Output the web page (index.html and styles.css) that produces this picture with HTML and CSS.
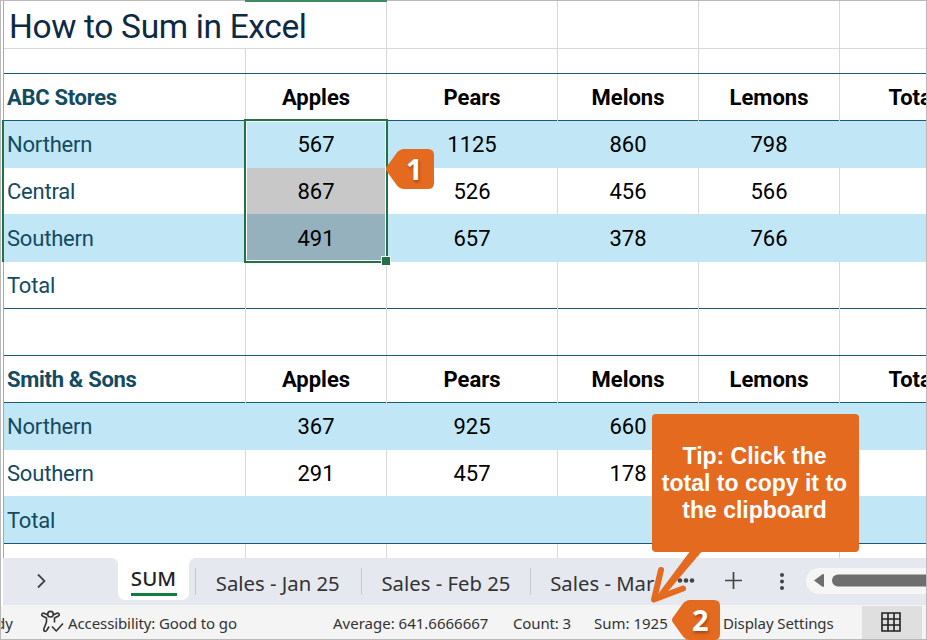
FILE: index.html
```html
<!DOCTYPE html>
<html lang="en">
<head>
    <meta charset="UTF-8">
    <meta name="viewport" content="width=device-width, initial-scale=1.0">
    <title>How to Sum in Excel</title>
    <link rel="stylesheet" href="styles.css">
</head>
<body>
    <div class="window">
        <div class="sheet">
            <div class="row title-row"><h1>How to Sum in Excel</h1><i></i><i></i><i></i><i></i></div>
            <div class="row spacer small"><i></i><i></i><i></i><i></i><i></i><i></i></div>
            <div class="row head"><b>ABC Stores</b><b>Apples</b><b>Pears</b><b>Melons</b><b>Lemons</b><b>Total</b></div>
            <div class="row band"><span>Northern</span><span>567</span><span>1125</span><span>860</span><span>798</span><span></span></div>
            <div class="row plain"><span>Central</span><span class="picked">867</span><span>526</span><span>456</span><span>566</span><span></span></div>
            <div class="row band tall"><span>Southern</span><span class="picked dark">491</span><span>657</span><span>378</span><span>766</span><span></span></div>
            <div class="row last"><span>Total</span><span></span><span></span><span></span><span></span><span></span></div>
            <div class="row spacer"><i></i><i></i><i></i><i></i><i></i><i></i></div>
            <div class="row head"><b>Smith &amp; Sons</b><b>Apples</b><b>Pears</b><b>Melons</b><b>Lemons</b><b>Total</b></div>
            <div class="row band"><span>Northern</span><span>367</span><span>925</span><span>660</span><span></span><span></span></div>
            <div class="row plain"><span>Southern</span><span>291</span><span>457</span><span>178</span><span></span><span></span></div>
            <div class="row band tall last"><span>Total</span><span></span><span></span><span></span><span></span><span></span></div>
            <div class="row tail"><i></i><i></i><i></i><i></i><i></i><i></i></div>
            <div class="selection"></div>
        </div>

        <div class="tabs">
            <div class="nav">
                <svg width="12" height="16" viewBox="0 0 12 16"><path d="M2 1.5 8.5 8 2 14.5"/></svg>
            </div>
            <div class="tab active"><span>SUM</span></div>
            <div class="tab jan">Sales - Jan 25</div>
            <div class="tab feb">Sales - Feb 25</div>
            <div class="tab mar">Sales - Mar</div>
            <div class="tools">
                <svg width="252" height="44" viewBox="0 0 252 44">
                    <g class="dots">
                        <circle cx="6" cy="22.500" r="2.300"/><circle cx="12" cy="22.500" r="2.300"/><circle cx="18" cy="22.500" r="2.300"/>
                        <circle cx="108" cy="17" r="2"/><circle cx="108" cy="23.500" r="2"/><circle cx="108" cy="30" r="2"/>
                    </g>
                    <path class="plus" d="M51 22.500h17M59.500 14v17"/>
                    <rect class="track" x="132" y="10" width="140" height="26" rx="13"/>
                    <path class="left" d="M140 22.500 148 16.500Q150 15.500 150 17V28Q150 29.500 148 28.500Z"/>
                    <rect class="thumb" x="158" y="16.500" width="120" height="12" rx="6"/>
                </svg>
            </div>
        </div>

        <div class="status">
            <span class="ready">dy</span>
            <svg class="person" width="24" height="24" viewBox="0 0 24 24">
                <circle cx="10.500" cy="4.200" r="2.800"/>
                <path d="M7.500 4.800 4 3.200Q2 2.800 1.700 4.500 1.600 5.600 3 6.300L6.500 8V12L3.800 19Q3.500 21 5 21.300 6.300 21.500 7 20L9 16.500M13.500 4.800 17 3.200Q19 2.800 19.300 4.500 19.400 5.600 18 6.300L14.500 8V12.500M12 16.500l4.300 4.500 6.700-7.500"/>
            </svg>
            <span class="access">Accessibility: Good to go</span>
            <span class="average">Average: 641.6666667</span>
            <span class="count">Count: 3</span>
            <span class="sum">Sum: 1925</span>
            <span class="display">Display Settings</span>
            <span class="view">
                <svg width="20" height="20" viewBox="0 0 20 20"><path d="M1 1h18v18H1zM7 1v18M13 1v18M1 7h18M1 13h18"/></svg>
            </span>
        </div>
    </div>

    <div class="row-mark"></div>
    <div class="top-mark"></div>

    <!-- callouts -->
    <svg class="arrow" width="70" height="66" viewBox="0 0 70 66">
        <path class="barbs" d="M19 26 12 55.500 41 44.500"/>
        <path class="shaft" d="M10.500 57.500 49 6H61L22 52Z"/>
    </svg>
    <div class="tip">Tip: Click the<br>total to copy it to<br>the clipboard</div>
    <div class="badge one">
        <svg width="48" height="40" viewBox="0 0 48 40"><path d="M.5 22Q-.5 20 .5 18L11 3.500Q14 0 18 0H42Q48 0 48 6V34Q48 40 42 40H18Q14 40 11 36.500Z"/></svg>
        <span>1</span>
    </div>
    <div class="badge two">
        <svg width="48" height="40" viewBox="0 0 48 40"><path d="M.5 22Q-.5 20 .5 18L11 3.500Q14 0 18 0H42Q48 0 48 6V34Q48 40 42 40H18Q14 40 11 36.500Z"/></svg>
        <span>2</span>
    </div>
</body>
</html>
```

FILE: styles.css
```css
* {
    box-sizing: border-box;
}
body {
    margin: 0;
    width: 927px;
    height: 640px;
    overflow: hidden;
    position: relative;
    background: #fff;
    font-family: Roboto, sans-serif;
}
.window {
    width: 927px;
    height: 640px;
    border: 1px solid #b9b9b9;
    overflow: hidden;
    display: flex;
    flex-direction: column;
}
.sheet {
    position: relative;
    height: 557px;
    margin-left: 2px;
    border-left: 1px solid #a8a8a8;
    overflow: hidden;
    flex: none;
}
.row {
    display: grid;
    grid-template-columns: 242px 141px 171px 141px 141px 147px;
    height: 47px;
    font-size: 22px;
    line-height: 47px;
    color: #000;
}
.row > * {
    border-right: 1px solid #d9d9d9;
    text-align: center;
}
.row > :first-child {
    text-align: left;
    padding-left: 3px;
    color: #134b63;
    letter-spacing: -0.2px;
}
.title-row {
    grid-template-columns: 383px 171px 141px 141px 147px;
    height: 48px;
    border-bottom: 1px solid #d9d9d9;
}
h1 {
    margin: 0;
    font-size: 33.5px;
    font-weight: 400;
    line-height: 51px;
}
.row > h1:first-child {
    color: #0d2a45;
    padding-left: 5px;
    letter-spacing: -0.35px;
}
.small {
    height: 24px;
}
.head {
    height: 48px;
    line-height: 48px;
    border-top: 1px solid #1b5a75;
    border-bottom: 1px solid #1b5a75;
}
.row.head > :first-child {
    letter-spacing: -0.3px;
}
.band {
    background: #c1e6f5;
}
.band > * {
    border-color: transparent;
}
.plain {
    height: 46px;
}
.tall {
    height: 48px;
    line-height: 49px;
}
.last {
    border-bottom: 1px solid #1b5a75;
}
.spacer:not(.small) {
    height: 46px;
}
.picked {
    background: #c8c8c8;
}
.dark {
    background: #95b1be;
}
.top-mark {
    position: absolute;
    left: 245px;
    top: 0;
    width: 142px;
    height: 2px;
    background: #3f8a60;
}
.row-mark {
    position: absolute;
    left: 2px;
    top: 120px;
    width: 2px;
    height: 142px;
    background: #217346;
}
.selection {
    position: absolute;
    left: 240px;
    top: 118px;
    width: 144px;
    height: 144px;
    border: 2px solid #217346;
    box-shadow: inset 0 0 0 1px #fff;
}
.selection::after {
    content: "";
    position: absolute;
    right: -5px;
    bottom: -5px;
    width: 8px;
    height: 8px;
    background: #217346;
    border: 1px solid #fff;
}
.tabs {
    height: 48px;
    background: #e5e8ef;
    border-bottom: 1px solid #f4f4f4;
    display: flex;
    flex: none;
    margin-left: 2px;
    font: 20.3px/48px "Noto Sans", sans-serif;
    color: #333;
}
.nav {
    width: 115px;
    padding: 15px 0 0 33px;
    line-height: 0;
}
.nav path {
    fill: none;
    stroke: #444;
    stroke-width: 1.8;
}
.tab {
    white-space: nowrap;
    line-height: 51px;
}
.active {
    position: relative;
    width: 71px;
    height: 42px;
    background: #fff;
    border-radius: 0 0 7px 7px;
    padding-left: 13px;
    line-height: 0;
    color: #222;
}
.active::before, .active::after {
    content: "";
    position: absolute;
    top: 0;
    width: 6px;
    height: 6px;
}
.active::before {
    left: -6px;
    background: radial-gradient(circle at 0 100%, transparent 5.5px, #fff 6px);
}
.active::after {
    right: -6px;
    background: radial-gradient(circle at 100% 100%, transparent 5.5px, #fff 6px);
}
.active span {
    display: block;
    width: 46px;
    height: 38px;
    line-height: 41px;
    font-size: 20.5px;
    font-weight: 500;
    border-bottom: 3px solid #107c41;
}
.jan {
    padding-left: 27px;
    width: 173px;
    background: linear-gradient(#c5c8ce, #c5c8ce) 6px 10px / 1px 27px no-repeat;
}
.feb {
    padding-left: 20px;
    width: 169px;
}
.mar {
    padding-left: 20px;
    width: 144px;
}
.feb, .mar {
    background: linear-gradient(#c5c8ce, #c5c8ce) 0 10px / 1px 27px no-repeat;
}
.tools {
    line-height: 0;
    flex: none;
}
.dots, .plus {
    fill: #444;
}
.plus {
    stroke: #444;
    stroke-width: 1.7;
}
.track {
    fill: #f6f6f6;
}
.left, .thumb {
    fill: #6e6e6e;
}
.status {
    flex: 1;
    display: flex;
    background: #f4f4f4;
    font: 15px/34px "Noto Sans", sans-serif;
    color: #333;
    white-space: nowrap;
}
.status > * {
    flex: none;
}
.ready {
    width: 41px;
    margin-left: -5px;
}
.person {
    margin: 4px 4px 0 3px;
    fill: none;
    stroke: #333;
    stroke-width: 1.6;
    stroke-linejoin: round;
}
.access {
    width: 265px;
    letter-spacing: -0.1px;
}
.average {
    width: 180px;
}
.count {
    width: 81px;
    letter-spacing: -0.15px;
}
.sum {
    width: 129px;
}
.display {
    width: 139px;
    letter-spacing: -0.1px;
}
.view {
    width: 60px;
    background: #dfdfdf;
    padding: 6px 0 0 19px;
    line-height: 0;
}
.view path {
    fill: none;
    stroke: #222;
    stroke-width: 1.6;
}
.tip {
    position: absolute;
    left: 652px;
    top: 414px;
    width: 207px;
    height: 138px;
    padding: 29px 2px 0 0;
    border-radius: 4px;
    background: #e46a20;
    color: #fff;
    font: bold 23px/27px "Liberation Sans", Arial, sans-serif;
    text-align: center;
    white-space: nowrap;
}
.arrow {
    position: absolute;
    left: 642px;
    top: 544px;
}
.barbs {
    fill: none;
    stroke: #e46a20;
    stroke-width: 6;
    stroke-linecap: round;
    stroke-linejoin: round;
}
.shaft {
    fill: #e46a20;
}
.badge {
    position: absolute;
    width: 48px;
    height: 40px;
    color: #fff;
    font: bold 29px/40px "Noto Sans", sans-serif;
}
.badge path {
    fill: #e46a20;
}
.badge span {
    position: absolute;
    left: 20px;
    top: 0;
    text-shadow: 1px 2px 3px rgba(90, 30, 0, 0.45);
}
.one {
    left: 386px;
    top: 149px;
}
.two {
    left: 672px;
    top: 600px;
}
```
